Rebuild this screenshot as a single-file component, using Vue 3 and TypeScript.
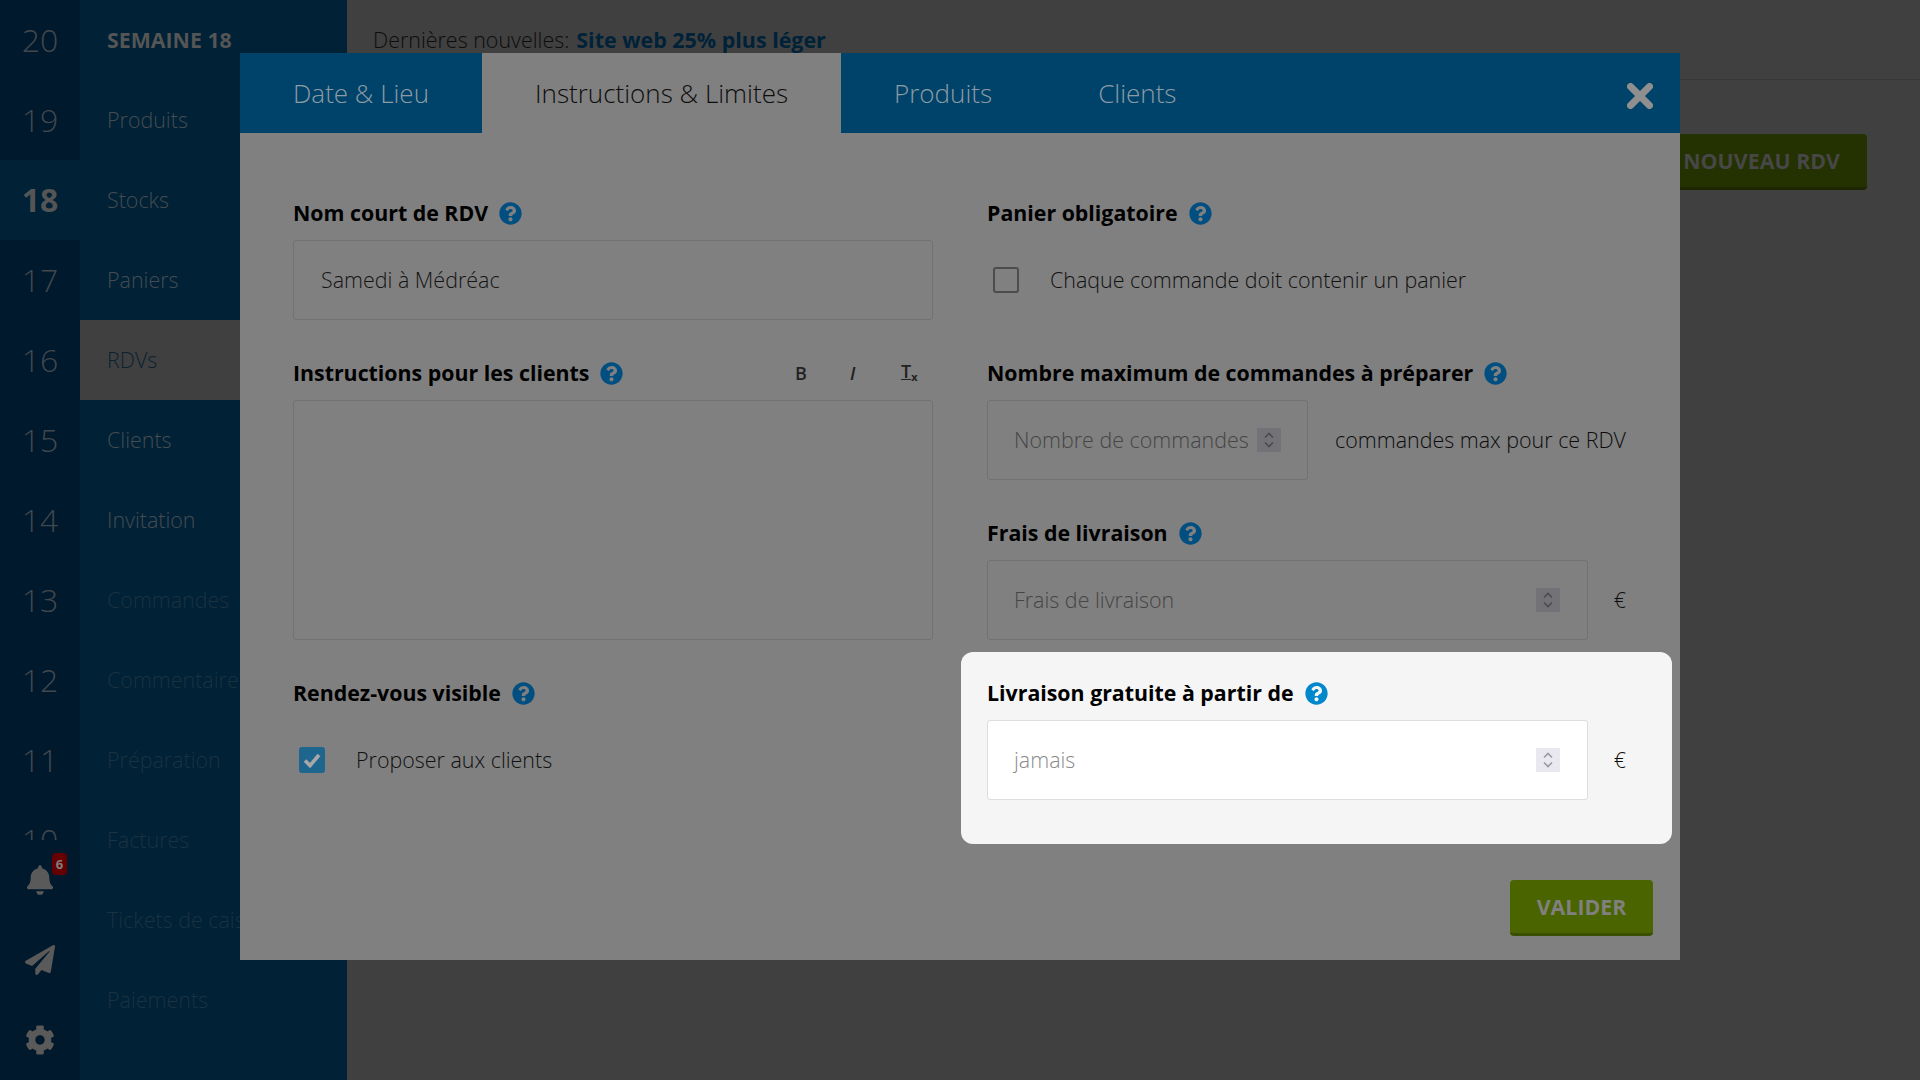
<script setup lang="ts">
const weeks = [20, 19, 18, 17, 16, 15, 14, 13, 12, 11, 10]
const nav = [
  { label: 'SEMAINE 18', kind: 'head' },
  { label: 'Produits', kind: '' },
  { label: 'Stocks', kind: '' },
  { label: 'Paniers', kind: '' },
  { label: 'RDVs', kind: 'active' },
  { label: 'Clients', kind: '' },
  { label: 'Invitation', kind: '' },
  { label: 'Commandes', kind: 'off' },
  { label: 'Commentaires', kind: 'off' },
  { label: 'Préparation', kind: 'off' },
  { label: 'Factures', kind: 'off' },
  { label: 'Tickets de caisse', kind: 'off' },
  { label: 'Paiements', kind: 'off' },
]
const tabs = ['Date & Lieu', 'Instructions & Limites', 'Produits', 'Clients']
const helpPath = 'M504 256c0 136.997-111.043 248-248 248S8 392.997 8 256C8 119.083 119.043 8 256 8s248 111.083 248 248zM262.655 90c-54.497 0-89.255 22.957-116.549 63.758-3.536 5.286-2.353 12.415 2.715 16.258l34.699 26.31c5.205 3.947 12.621 3.008 16.665-2.122 17.864-22.658 30.113-35.797 57.303-35.797 20.429 0 45.698 13.148 45.698 32.958 0 14.976-12.363 22.667-32.534 33.976C247.128 238.528 216 254.941 216 296v4c0 6.627 5.373 12 12 12h56c6.627 0 12-5.373 12-12v-1.333c0-28.462 83.186-29.647 83.186-106.667 0-58.002-60.165-102-116.531-102zM256 338c-25.365 0-46 20.635-46 46 0 25.364 20.635 46 46 46s46-20.636 46-46c0-25.365-20.635-46-46-46z'
</script>

<template>
  <div class="page">
    <aside class="sidebar">
      <div class="weeks">
        <div class="week-list">
          <div v-for="w in weeks" :key="w" class="week" :class="{ current: w === 18 }">{{ w }}</div>
        </div>
        <div class="tools">
          <div class="tool">
            <svg class="bell" viewBox="0 0 448 512"><path d="M224 512c35.32 0 63.97-28.65 63.97-64H160.03c0 35.35 28.65 64 63.97 64zm215.39-149.71c-19.32-20.76-55.47-51.99-55.47-154.29 0-77.7-54.48-139.9-127.94-155.16V32c0-17.67-14.32-32-31.98-32s-31.98 14.33-31.98 32v20.84C118.56 68.1 64.08 130.3 64.08 208c0 102.3-36.15 133.53-55.47 154.29-6 6.45-8.66 14.16-8.61 21.71.11 16.4 12.98 32 32.1 32h383.8c19.12 0 32-15.6 32.1-32 .05-7.55-2.61-15.27-8.61-21.71z"/></svg>
            <span class="badge">6</span>
          </div>
          <div class="tool">
            <svg class="plane" viewBox="0 0 512 512"><path d="M476 3.2L12.5 270.6c-18.1 10.4-15.8 35.6 2.2 43.2L121 358.4l287.3-253.2c5.5-4.9 13.3 2.6 8.6 8.3L176 407v80.5c0 23.6 28.5 32.9 42.5 15.8L282 426l124.6 52.2c14.2 6 30.4-2.9 33-18.2l72-432C515 7.8 493.3-6.8 476 3.2z"/></svg>
          </div>
          <div class="tool">
            <svg class="cog" viewBox="0 0 512 512"><path d="M487.4 315.7l-42.6-24.6c4.3-23.2 4.3-47 0-70.2l42.6-24.6c4.9-2.8 7.1-8.6 5.5-14-11.1-35.6-30-67.8-54.7-94.6-3.8-4.1-10-5.1-14.8-2.3L380.8 110c-17.9-15.4-38.5-27.3-60.8-35.1V25.8c0-5.6-3.9-10.5-9.4-11.7-36.7-8.2-74.3-7.8-109.2 0-5.5 1.2-9.4 6.1-9.4 11.7V75c-22.2 7.9-42.8 19.8-60.8 35.1L88.7 85.5c-4.9-2.8-11-1.9-14.8 2.3-24.7 26.7-43.6 58.9-54.7 94.6-1.7 5.4.6 11.2 5.5 14L67.3 221c-4.3 23.2-4.3 47 0 70.2l-42.6 24.6c-4.9 2.8-7.1 8.6-5.5 14 11.1 35.6 30 67.8 54.7 94.6 3.8 4.1 10 5.1 14.8 2.3l42.6-24.6c17.9 15.4 38.5 27.3 60.8 35.1v49.2c0 5.6 3.9 10.5 9.4 11.7 36.7 8.2 74.3 7.8 109.2 0 5.5-1.2 9.4-6.1 9.4-11.7v-49.2c22.2-7.9 42.8-19.8 60.8-35.1l42.6 24.6c4.9 2.8 11 1.9 14.8-2.3 24.7-26.7 43.6-58.9 54.7-94.6 1.5-5.5-.7-11.3-5.6-14.1zM256 336c-44.1 0-80-35.9-80-80s35.9-80 80-80 80 35.9 80 80-35.9 80-80 80z"/></svg>
          </div>
        </div>
      </div>
      <nav class="nav">
        <div v-for="item in nav" :key="item.label" class="nav-item" :class="item.kind">{{ item.label }}</div>
      </nav>
    </aside>

    <main class="main">
      <div class="news"><span>Dernières nouvelles:</span><b>Site web 25% plus léger</b></div>
      <div class="actions"><button class="new-btn">NOUVEAU RDV</button></div>
    </main>

    <section class="modal">
      <header class="modal-head">
        <div v-for="(t, i) in tabs" :key="t" class="tab" :class="{ active: i === 1 }">{{ t }}</div>
        <svg class="close" viewBox="0 0 26 26"><path d="M3.5 3.5 22.5 22.5M22.5 3.5 3.5 22.5"/></svg>
      </header>
      <div class="modal-body">
        <div class="col">
          <div class="field">
            <div class="label"><span>Nom court de RDV</span><svg class="help" viewBox="0 0 512 512"><path :d="helpPath"/></svg></div>
            <div class="input"><span class="value">Samedi à Médréac</span></div>
          </div>
          <div class="field">
            <div class="label">
              <span>Instructions pour les clients</span><svg class="help" viewBox="0 0 512 512"><path :d="helpPath"/></svg>
              <div class="toolbar">
                <span class="tb-b">B</span>
                <span class="tb-i">I</span>
                <span class="tb-t">T<small>x</small></span>
              </div>
            </div>
            <div class="input area"></div>
          </div>
          <div class="field">
            <div class="label"><span>Rendez-vous visible</span><svg class="help" viewBox="0 0 512 512"><path :d="helpPath"/></svg></div>
            <div class="check-row">
              <span class="box checked">
                <svg viewBox="0 0 26 26"><path d="M6 13.5 11 18.5 20 8"/></svg>
              </span>
              <span class="lift">Proposer aux clients</span>
            </div>
          </div>
        </div>
        <div class="col">
          <div class="field">
            <div class="label"><span>Panier obligatoire</span><svg class="help" viewBox="0 0 512 512"><path :d="helpPath"/></svg></div>
            <div class="check-row">
              <span class="box"></span>
              <span class="lift">Chaque commande doit contenir un panier</span>
            </div>
          </div>
          <div class="field">
            <div class="label"><span>Nombre maximum de commandes à préparer</span><svg class="help" viewBox="0 0 512 512"><path :d="helpPath"/></svg></div>
            <div class="with-suffix">
              <div class="input short">
                <span class="placeholder">Nombre de commandes</span>
                <span class="spin"><svg viewBox="0 0 24 24"><path d="M8 9.5 12 5.5 16 9.5M8 14.5 12 18.5 16 14.5"/></svg></span>
              </div>
              <span class="suffix-text lift">commandes max pour ce RDV</span>
            </div>
          </div>
          <div class="field">
            <div class="label"><span>Frais de livraison</span><svg class="help" viewBox="0 0 512 512"><path :d="helpPath"/></svg></div>
            <div class="with-suffix">
              <div class="input grow">
                <span class="placeholder">Frais de livraison</span>
                <span class="spin"><svg viewBox="0 0 24 24"><path d="M8 9.5 12 5.5 16 9.5M8 14.5 12 18.5 16 14.5"/></svg></span>
              </div>
              <span class="euro lift">€</span>
            </div>
          </div>
          <div class="field spot">
            <div class="label"><span>Livraison gratuite à partir de</span><svg class="help" viewBox="0 0 512 512"><path :d="helpPath"/></svg></div>
            <div class="with-suffix">
              <div class="input grow">
                <span class="placeholder">jamais</span>
                <span class="spin"><svg viewBox="0 0 24 24"><path d="M8 9.5 12 5.5 16 9.5M8 14.5 12 18.5 16 14.5"/></svg></span>
              </div>
              <span class="euro lift">€</span>
            </div>
          </div>
        </div>
      </div>
      <footer class="modal-foot"><button class="submit">VALIDER</button></footer>
    </section>
  </div>
</template>

<style>
html, body { margin: 0; background: #404040; }
</style>

<style scoped>
.page {
  position: relative;
  display: flex;
  width: 1920px;
  height: 1080px;
  overflow: hidden;
  background: #404040;
  font-family: "Open Sans", sans-serif;
  font-size: 21.45px;
  font-weight: 300;
  line-height: 27px;
  color: #111;
}
.sidebar { display: flex; flex: none; width: 347px; background: #002136; }
.weeks { display: flex; flex-direction: column; width: 80px; background: #00192c; }
.week-list { flex: none; height: 840px; overflow: hidden; }
.week {
  display: flex;
  align-items: center;
  justify-content: center;
  height: 80px;
  padding-bottom: 2px;
  box-sizing: border-box;
  font-size: 32px;
  color: #40484e;
}
.week.current { background: #002136; font-weight: 700; color: #555; }
.tools { display: flex; flex-direction: column; flex: 1; }
.tool { position: relative; display: flex; align-items: center; justify-content: center; height: 80px; }
.tool svg { fill: #5a5a5a; display: block; }
.bell { width: 26px; height: 30px; }
.plane { width: 30px; height: 30px; }
.cog { width: 30px; height: 30px; }
.badge {
  position: absolute;
  top: 13px;
  left: 52px;
  width: 15px;
  height: 22px;
  border-radius: 4px;
  background: #660000;
  color: #808080;
  font-size: 13px;
  font-weight: 700;
  line-height: 22px;
  text-align: center;
}
.nav { flex: 1; overflow: hidden; }
.nav-item {
  display: flex;
  align-items: center;
  height: 80px;
  padding-left: 27px;
  padding-bottom: 1px;
  box-sizing: border-box;
  color: #464c51;
  white-space: nowrap;
}
.nav-item.head { font-weight: 700; color: #555; font-size: 21.33px; }
.nav-item.active { background: #404040; color: #0b2230; }
.nav-item.off { color: #1b3240; }
.main { flex: 1; display: flex; flex-direction: column; }
.news {
  display: flex;
  align-items: center;
  gap: 7px;
  height: 79px;
  padding-left: 26px;
  border-bottom: 1px solid #383838;
  color: #0c0c0c;
}
.news b { color: #002238; font-weight: 700; }
.actions { display: flex; justify-content: flex-end; padding: 54px 53px 0 0; }
.new-btn {
  height: 56px;
  padding: 0 27px;
  border: 0;
  border-bottom: 3px solid #1c2600;
  border-radius: 4px;
  background: #243100;
  color: #474747;
  font: 700 21.4px "Open Sans", sans-serif;
}
.modal {
  position: absolute;
  left: 240px;
  top: 53px;
  width: 1440px;
  height: 907px;
  display: flex;
  flex-direction: column;
  background: #808080;
}
.modal-head { position: relative; display: flex; flex: none; height: 80px; background: #00436a; }
.tab {
  display: flex;
  align-items: center;
  padding: 0 53px;
  font-size: 26px;
  color: #8d9ba4;
}
.tab.active { background: #808080; color: #0d0d0d; }
.close {
  position: absolute;
  right: 27px;
  top: 30px;
  width: 26px;
  height: 26px;
  fill: none;
  stroke: #8f8f8f;
  stroke-width: 7;
  stroke-linecap: round;
}
.modal-body { display: flex; gap: 54px; flex: 1; padding: 67px 53px 0; }
.col { display: flex; flex-direction: column; gap: 40px; width: 640px; }
.field { display: flex; flex-direction: column; gap: 13px; }
.label {
  display: flex;
  align-items: center;
  height: 27px;
  font-size: 21.33px;
  font-weight: 700;
  color: #000;
  white-space: nowrap;
}
.label > span { margin-top: -2px; }
.help { flex: none; width: 23px; height: 23px; margin-left: 11px; fill: #004f80; }
.toolbar { display: flex; align-items: center; margin-left: auto; color: #222; font-weight: 600; }
.tb-b { position: absolute; left: 555px; font-size: 18px; }
.tb-i { position: absolute; left: 610px; font-size: 18px; font-style: italic; }
.tb-t { position: absolute; left: 661px; margin-top: 1px; font-size: 18px; text-decoration: underline; }
.tb-t small { font-size: 11px; font-weight: 700; vertical-align: -3px; }
.input {
  display: flex;
  align-items: center;
  box-sizing: border-box;
  height: 80px;
  padding: 0 27px 1px;
  border: 1px solid #727272;
  border-radius: 3px;
}
.area { height: 240px; }
.short { flex: none; width: 321px; padding-right: 26px; justify-content: space-between; }
.grow { flex: 1; justify-content: space-between; }
.value { color: #141414; }
.placeholder { margin-left: -1px; color: #454545; }
.spin { display: block; width: 24px; height: 24px; background: #737377; }
.spin svg { display: block; width: 24px; height: 24px; fill: none; stroke: #4c4c50; stroke-width: 1.6; }
.with-suffix { display: flex; align-items: center; height: 80px; }
.suffix-text { margin-left: 27px; white-space: nowrap; color: #0c0c0c; }
.euro { width: 39px; padding-right: 1px; box-sizing: border-box; text-align: right; color: #0c0c0c; }
.lift { margin-top: -2px; }
.check-row { display: flex; align-items: center; height: 80px; padding-left: 6px; color: #111; }
.box {
  display: block;
  box-sizing: border-box;
  flex: none;
  width: 26px;
  height: 26px;
  margin-right: 31px;
  border: 2px solid #4c4c4c;
  border-radius: 3px;
}
.box.checked { border: 0; background: #1f668f; }
.box svg { display: block; width: 26px; height: 26px; fill: none; stroke: #a8a8a8; stroke-width: 3.6; }
.spot {
  position: relative;
  margin: -28px -45px -44px -26px;
  padding: 28px 45px 44px 26px;
  border-radius: 12px;
  background: #f5f5f5;
}
.spot .help { fill: #0088cc; }
.spot .input { background: #fff; border-color: #ddd; }
.spot .placeholder { color: #8a8a8a; }
.spot .spin { background: #e8e8ee; }
.spot .spin svg { stroke: #9a9aa6; }
.modal-foot { display: flex; justify-content: flex-end; flex: none; padding: 0 27px 24px; }
.submit {
  width: 143px;
  height: 56px;
  border: 0;
  border-bottom: 3px solid #3b4f00;
  border-radius: 4px;
  background: #4a6400;
  color: #808080;
  font: 700 21.33px "Open Sans", sans-serif;
}
</style>
